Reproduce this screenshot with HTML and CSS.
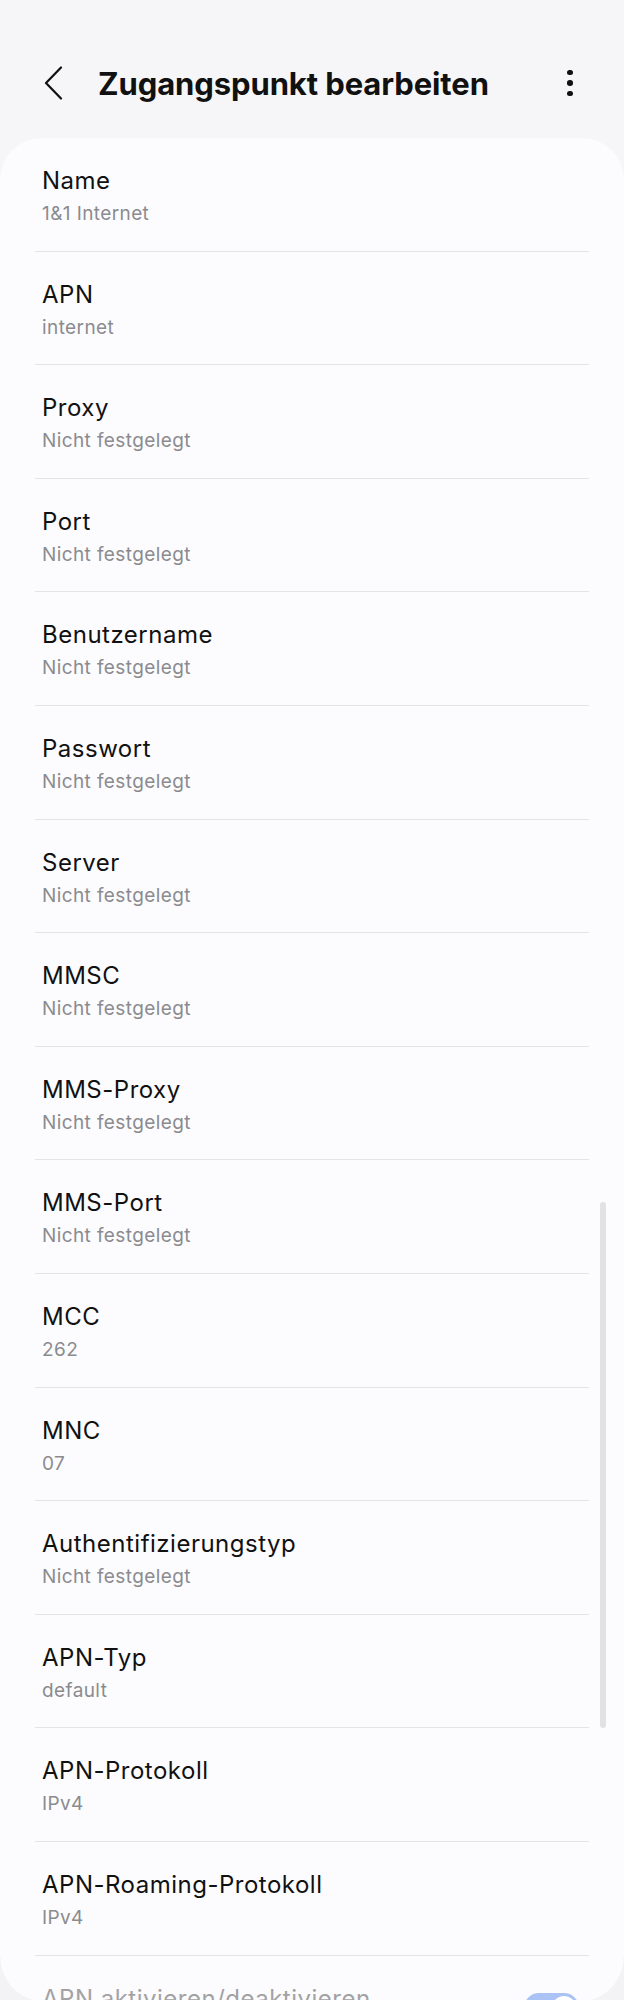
FILE: index.html
```html
<!DOCTYPE html>
<html lang="de">
<head>
    <meta charset="UTF-8">
    <meta name="viewport" content="width=device-width, initial-scale=1.0">
    <title>Zugangspunkt bearbeiten</title>
    <link rel="stylesheet" href="styles.css">
</head>
<body>
    <div class="screen">
        <!-- Header -->
        <header class="app-bar">
            <div class="back">
                <svg width="20" height="34" viewBox="0 0 20 34">
                    <path d="M17 1.5 L2 17 L17 32.5" fill="none" stroke="#111" stroke-width="2.2" stroke-linecap="round" stroke-linejoin="round"/>
                </svg>
            </div>
            <h1>Zugangspunkt bearbeiten</h1>
            <div class="more">
                <span></span><span></span><span></span>
            </div>
        </header>

        <!-- APN fields -->
        <section class="card">
            <div class="row"><div class="label">Name</div><div class="value">1&amp;1 Internet</div></div>
            <div class="row"><div class="label">APN</div><div class="value">internet</div></div>
            <div class="row"><div class="label">Proxy</div><div class="value">Nicht festgelegt</div></div>
            <div class="row"><div class="label">Port</div><div class="value">Nicht festgelegt</div></div>
            <div class="row"><div class="label">Benutzername</div><div class="value">Nicht festgelegt</div></div>
            <div class="row"><div class="label">Passwort</div><div class="value">Nicht festgelegt</div></div>
            <div class="row"><div class="label">Server</div><div class="value">Nicht festgelegt</div></div>
            <div class="row"><div class="label">MMSC</div><div class="value">Nicht festgelegt</div></div>
            <div class="row"><div class="label">MMS-Proxy</div><div class="value">Nicht festgelegt</div></div>
            <div class="row"><div class="label">MMS-Port</div><div class="value">Nicht festgelegt</div></div>
            <div class="row"><div class="label">MCC</div><div class="value">262</div></div>
            <div class="row"><div class="label">MNC</div><div class="value">07</div></div>
            <div class="row"><div class="label">Authentifizierungstyp</div><div class="value">Nicht festgelegt</div></div>
            <div class="row"><div class="label">APN-Typ</div><div class="value">default</div></div>
            <div class="row"><div class="label">APN-Protokoll</div><div class="value">IPv4</div></div>
            <div class="row"><div class="label">APN-Roaming-Protokoll</div><div class="value">IPv4</div></div>
            <div class="row row-switch">
                <div class="label disabled">APN aktivieren/deaktivieren</div>
                <div class="switch"><span class="thumb"></span></div>
            </div>
        </section>

        <div class="scrollbar"></div>
    </div>
</body>
</html>
```

FILE: styles.css
```css
/* Global */
body {
    margin: 0;
    padding: 0;
    background-color: #f6f6f8;
    font-family: Inter, Roboto, "Noto Sans", sans-serif;
    color: #111;
}

.screen {
    position: relative;
    height: 2000px;
    overflow: hidden;
}

/* bottom screen corners */
.screen::before,
.screen::after {
    content: "";
    position: absolute;
    bottom: -2px;
    width: 45px;
    height: 45px;
    z-index: 2;
}

.screen::before {
    left: 0;
    background: radial-gradient(circle at 100% 0, transparent 44px, #f3f3f5 45px);
}

.screen::after {
    right: 0;
    background: radial-gradient(circle at 0 0, transparent 44px, #f3f3f5 45px);
}

/* Header */
.app-bar {
    display: flex;
    align-items: center;
    height: 56px;
    margin-top: 55px;
    padding: 0 44px 0 44px;
}

.back {
    width: 20px;
    height: 34px;
    display: flex;
    align-items: center;
}

.app-bar h1 {
    flex: 1;
    margin: 0 0 0 34px;
    font-size: 31px;
    font-weight: 700;
    letter-spacing: -0.1px;
    color: #111;
}

.more {
    display: flex;
    flex-direction: column;
    align-items: center;
    gap: 5px;
    width: 12px;
    margin-right: 4px;
}

.more span {
    width: 5.5px;
    height: 5.5px;
    border-radius: 50%;
    background-color: #111;
}

/* Card */
.card {
    margin-top: 27px;
    background-color: #fcfcfe;
    border-radius: 42px 42px 0 0;
    padding: 0 35px;
}

.row {
    box-sizing: border-box;
    height: 113.6px;
    padding: 29px 7px 0;
    border-bottom: 1px solid #e4e4e6;
}

.label {
    font-size: 24px;
    line-height: 28px;
    letter-spacing: 0.5px;
    color: #111;
}

.value {
    margin-top: 7px;
    font-size: 19px;
    line-height: 24px;
    letter-spacing: 0.4px;
    color: #8b8b8f;
}

.row-switch {
    display: flex;
    justify-content: space-between;
    align-items: flex-start;
    border-bottom: none;
}

.label.disabled {
    color: #a2a2a5;
}

.switch {
    position: relative;
    flex-shrink: 0;
    width: 55px;
    height: 30px;
    margin-top: 8px;
    margin-right: 3px;
    border-radius: 15px;
    background-color: #aac3f4;
}

.switch .thumb {
    position: absolute;
    right: 3px;
    top: 3px;
    width: 24px;
    height: 24px;
    border-radius: 50%;
    background-color: #fff;
}

/* Scrollbar */
.scrollbar {
    position: absolute;
    left: 600px;
    top: 1202px;
    width: 6px;
    height: 526px;
    border-radius: 3px;
    background-color: #e2e2e4;
}
```
